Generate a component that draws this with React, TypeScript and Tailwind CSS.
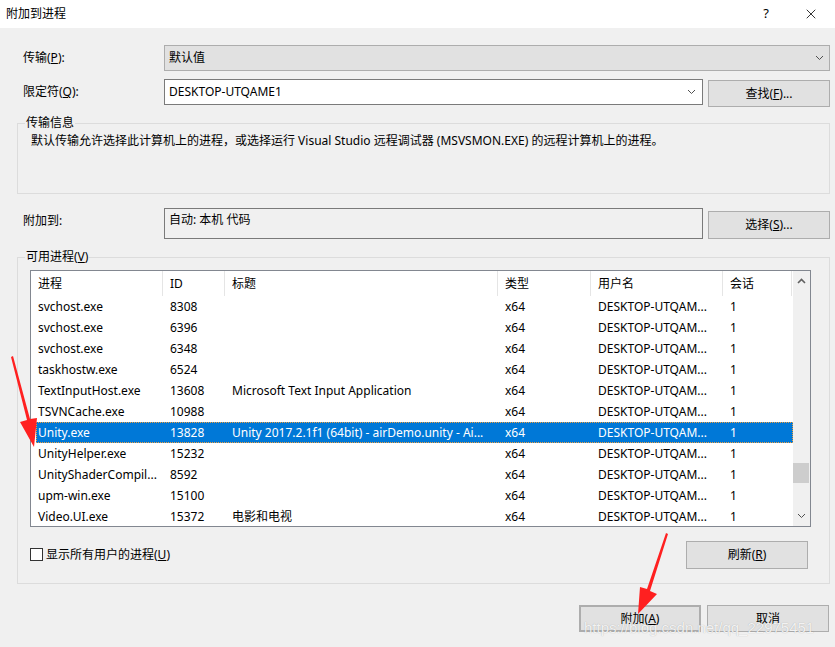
import { X } from 'lucide-react';

const FONT = '"Noto Sans", "Noto Sans CJK SC", sans-serif';

// 进程列表数据
const rows = [
  { name: 'svchost.exe', id: '8308', title: '' },
  { name: 'svchost.exe', id: '6396', title: '' },
  { name: 'svchost.exe', id: '6348', title: '' },
  { name: 'taskhostw.exe', id: '6524', title: '' },
  { name: 'TextInputHost.exe', id: '13608', title: 'Microsoft Text Input Application' },
  { name: 'TSVNCache.exe', id: '10988', title: '' },
  { name: 'Unity.exe', id: '13828', title: 'Unity 2017.2.1f1 (64bit) - airDemo.unity - Ai...', selected: true },
  { name: 'UnityHelper.exe', id: '15232', title: '' },
  { name: 'UnityShaderCompil...', id: '8592', title: '' },
  { name: 'upm-win.exe', id: '15100', title: '' },
  { name: 'Video.UI.exe', id: '15372', title: '电影和电视' },
];

function Chevron({ up = false }: { up?: boolean }) {
  return (
    <svg width="9" height="6" viewBox="0 0 9 6" className="shrink-0">
      <path d={up ? 'M1 5 L4.5 1.5 L8 5' : 'M1 1 L4.5 4.5 L8 1'} fill="none" stroke={up ? '#606060' : '#505050'} strokeWidth={up ? 1.6 : 1} />
    </svg>
  );
}

function Btn({ children, className = '' }: { children: React.ReactNode; className?: string }) {
  return (
    <div className={`w-[122px] h-[27px] bg-[#e1e1e1] border border-[#adadad] flex items-center justify-center text-[12px] text-black shrink-0 ${className}`}>
      {children}
    </div>
  );
}

const cell = 'pl-[7px] pr-[2px] overflow-hidden whitespace-nowrap shrink-0';

export default function App() {
  return (
    <div className="w-[835px] h-[647px] bg-[#f0f0f0] relative overflow-hidden text-[12px] text-black" style={{ fontFamily: FONT }}>
      {/* 标题栏 */}
      <div className="h-[28px] bg-white flex items-center pl-[6px]">
        <span className="text-[12px]">附加到进程</span>
        <span className="ml-auto text-[13px] mr-[34px]">?</span>
        <X size={16} strokeWidth={1.2} className="mr-[16px]" />
      </div>

      <div className="pl-[17px] pr-[5px]">
        {/* 传输 */}
        <div className="flex items-center mt-[17px]">
          <span className="w-[147px] pl-[6px]">传输(<u>P</u>):</span>
          <div className="w-[666px] h-[26px] bg-[#e1e1e1] border border-[#adadad] flex items-center pl-[4px] pr-[5px]">
            <span>默认值</span>
            <span className="ml-auto"><Chevron /></span>
          </div>
        </div>

        {/* 限定符 */}
        <div className="flex items-start mt-[8px]">
          <span className="w-[147px] pl-[6px] mt-[4px]">限定符(<u>Q</u>):</span>
          <div className="w-[539px] h-[26px] bg-white border border-[#7a7a7a] flex items-center pl-[4px] pr-[6px]">
            <span>DESKTOP-UTQAME1</span>
            <span className="ml-auto"><Chevron /></span>
          </div>
          <Btn className="ml-[5px] mt-[1px]">查找(<u>F</u>)...</Btn>
        </div>

        {/* 传输信息 */}
        <fieldset className="border border-[#dcdcdc] h-[78px] mt-[9px] pl-[13px]">
          <legend className="ml-[-6px] px-[1px] leading-[14px]">传输信息</legend>
          <div className="mt-[2px]">默认传输允许选择此计算机上的进程，或选择运行 Visual Studio 远程调试器 (MSVSMON.EXE) 的远程计算机上的进程。</div>
        </fieldset>

        {/* 附加到 */}
        <div className="flex items-start mt-[14px]">
          <span className="w-[147px] pl-[6px] mt-[4px]">附加到:</span>
          <div className="w-[539px] h-[31px] border border-[#7a7a7a] pl-[4px] pt-[2px]">自动: 本机 代码</div>
          <Btn className="ml-[5px] mt-[3px] h-[28px]">选择(<u>S</u>)...</Btn>
        </div>

        {/* 可用进程 */}
        <fieldset className="border border-[#dcdcdc] h-[334px] mt-[11px] pl-[12px]">
          <legend className="ml-[-5px] px-[1px] leading-[14px]">可用进程(<u>V</u>)</legend>
          <div className="w-[781px] h-[257px] mt-[6px] bg-white border border-[#828790] flex overflow-hidden">
            <div className="w-[762px] flex flex-col">
              {/* 表头 */}
              <div className="h-[25px] flex items-center shrink-0">
                <div className={`${cell} w-[132px] border-r border-[#e5e5e5] h-full flex items-center`}>进程</div>
                <div className={`${cell} w-[62px] border-r border-[#e5e5e5] h-full flex items-center`}>ID</div>
                <div className={`${cell} w-[273px] border-r border-[#e5e5e5] h-full flex items-center`}>标题</div>
                <div className={`${cell} w-[93px] border-r border-[#e5e5e5] h-full flex items-center`}>类型</div>
                <div className={`${cell} w-[132px] border-r border-[#e5e5e5] h-full flex items-center`}>用户名</div>
                <div className={`${cell} w-[69px] border-r border-[#e5e5e5] h-full flex items-center`}>会话</div>
              </div>
              {rows.map((r, i) => (
                <div
                  key={i}
                  className={`h-[21px] flex items-center shrink-0 ml-[5px] ${r.selected ? 'bg-[#0078d7] text-white border border-dotted border-[#f0a040]' : 'border border-transparent'}`}
                >
                  <div className="w-[126px] pl-[1px] pr-[2px] overflow-hidden whitespace-nowrap shrink-0">{r.name}</div>
                  <div className={`${cell} w-[62px]`}>{r.id}</div>
                  <div className={`${cell} w-[273px]`}>{r.title}</div>
                  <div className={`${cell} w-[93px]`}>x64</div>
                  <div className={`${cell} w-[132px]`}>DESKTOP-UTQAM...</div>
                  <div className={`${cell} w-[67px]`}>1</div>
                </div>
              ))}
            </div>
            {/* 滚动条 */}
            <div className="w-[17px] bg-[#f0f0f0] flex flex-col items-center">
              <div className="h-[20px] flex items-center"><Chevron up /></div>
              <div className="w-[16px] h-[20px] bg-[#cdcdcd] mt-[172px] self-start"></div>
              <div className="mt-auto h-[20px] flex items-center"><Chevron /></div>
            </div>
          </div>

          <div className="flex items-center mt-[13px] pr-[21px]">
            <div className="w-[13px] h-[13px] border border-[#333] bg-white"></div>
            <span className="ml-[3px]">显示所有用户的进程(<u>U</u>)</span>
            <Btn className="ml-auto mt-[1px] h-[28px]">刷新(<u>R</u>)</Btn>
          </div>
        </fieldset>

        {/* 底部按钮 */}
        <div className="flex justify-end mt-[21px] gap-[6px] pr-[1px]">
          <Btn className="border-2 border-[#0078d7]">附加(<u>A</u>)</Btn>
          <Btn>取消</Btn>
        </div>
      </div>

      {/* 水印 */}
      <div
        className="absolute left-[584px] top-[617px] text-[15px] text-white/85 pointer-events-none whitespace-nowrap"
        style={{ fontFamily: '"Liberation Sans", Arial, sans-serif', textShadow: '0 0 1px rgba(0,0,0,0.3)' }}
      >
        https://blog.csdn.net/qq_22975451
      </div>

      {/* 红色箭头 */}
      <svg className="absolute left-0 top-0 pointer-events-none" width="835" height="647">
        <path d="M11 357 L27 420 L20 422 L34 447 L37 418 L30 419 L13 356 Z" fill="#ff2020" />
        <path d="M666 533 L647 589 L640 587 L638 614 L657 594 L650 591 L668 534 Z" fill="#ff2020" />
      </svg>
    </div>
  );
}
